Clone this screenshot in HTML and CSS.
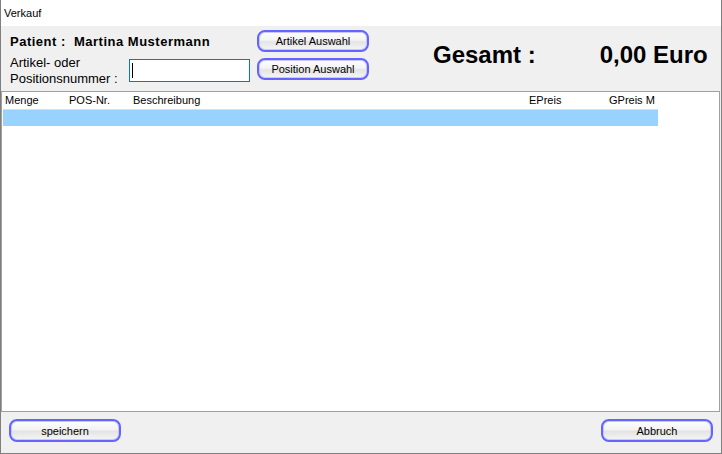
FILE: index.html
```html
<!DOCTYPE html>
<html lang="de">
<head>
<meta charset="utf-8">
<title>Verkauf</title>
<link rel="stylesheet" href="styles.css">
</head>
<body>
<div class="window">
  <div class="titlebar">Verkauf</div>
  <div class="header">
    <div class="patient-block">
      <div class="patient">Patient :  Martina Mustermann</div>
      <div class="entry">
        <div class="entry-label">Artikel- oder<br>Positionsnummer :</div>
        <div class="input"><span class="caret"></span></div>
      </div>
    </div>
    <div class="btn-col">
      <button class="btn">Artikel Auswahl</button>
      <button class="btn">Position Auswahl</button>
    </div>
    <div class="total">
      <span class="total-label">Gesamt :</span>
      <span class="total-value">0,00 Euro</span>
    </div>
  </div>
  <div class="list">
    <div class="list-head">
      <span>Menge</span>
      <span>POS-Nr.</span>
      <span>Beschreibung</span>
      <span>EPreis</span>
      <span>GPreis M</span>
    </div>
    <div class="list-row selected"></div>
  </div>
  <div class="footer">
    <button class="btn">speichern</button>
    <button class="btn">Abbruch</button>
  </div>
</div>
</body>
</html>
```
FILE: styles.css
```css
* { box-sizing: border-box; }
html, body { margin: 0; padding: 0; background: #ffffff; }
body { font-family: "Liberation Sans", Arial, sans-serif; color: #000; }

.window {
  width: 722px;
  height: 454px;
  border: 1px solid #7f7f7f;
  border-top: none;
  display: flex;
  flex-direction: column;
  background: #f0f0f0;
}

.titlebar {
  height: 26px;
  background: #ffffff;
  font-size: 11px;
  line-height: 26px;
  padding-left: 3px;
}

.header {
  height: 65px;
  display: flex;
  padding-left: 9px;
}

.patient-block {
  width: 240px;
  padding-top: 8px;
}
.patient {
  font-size: 13px;
  font-weight: bold;
  letter-spacing: 0.5px;
  line-height: 16px;
  white-space: pre;
}
.entry {
  display: flex;
  margin-top: 5px;
}
.entry-label {
  font-size: 13px;
  line-height: 16px;
  width: 119px;
  margin-top: 0;
}
.input {
  width: 121px;
  height: 23px;
  margin-top: 4px;
  background: #ffffff;
  border: 1px solid #0078d7;
  padding: 3px 0 0 2px;
}
.caret {
  display: block;
  width: 1px;
  height: 15px;
  background: #000;
}

.btn-col {
  display: flex;
  flex-direction: column;
  gap: 6px;
  padding-top: 4px;
  margin-left: 7px;
}

.btn {
  width: 112px;
  height: 23px;
  padding: 0;
  border: 2px solid #6464ff;
  border-radius: 8px;
  box-shadow: inset 0 0 0 1px #c8c8ff;
  background: linear-gradient(to bottom, #fefefe 0%, #f3f3f3 45%, #e4e4e4 55%, #f6f6f6 100%);
  font-family: "Liberation Sans", Arial, sans-serif;
  font-size: 11px;
  color: #000;
  line-height: 18px;
}
.btn-col .btn { height: 22px; }

.total {
  display: flex;
  margin-left: 64px;
  padding-top: 15px;
  font-size: 24px;
  font-weight: bold;
  line-height: 28px;
}
.total-value { margin-left: 64px; }

.list {
  height: 321px;
  margin-right: 1px;
  background: #ffffff;
  border: 1px solid #a0a0a0;
  padding-top: 0;
}
.list-head {
  display: grid;
  grid-template-columns: 64px 64px 396px 80px 51px;
  height: 17px;
  font-size: 11px;
  line-height: 17px;
  padding-left: 2px;
}
.list-head span { padding-left: 1px; white-space: nowrap; }
.list-row {
  height: 17px;
  width: 655px;
  margin-left: 1px;
}
.list-row.selected {
  background: #99d1ff;
  border-top: 1px solid #c4e4ff;
}

.footer {
  flex: 1;
  display: flex;
  justify-content: space-between;
  padding: 7px 8px 0 8px;
}
```
